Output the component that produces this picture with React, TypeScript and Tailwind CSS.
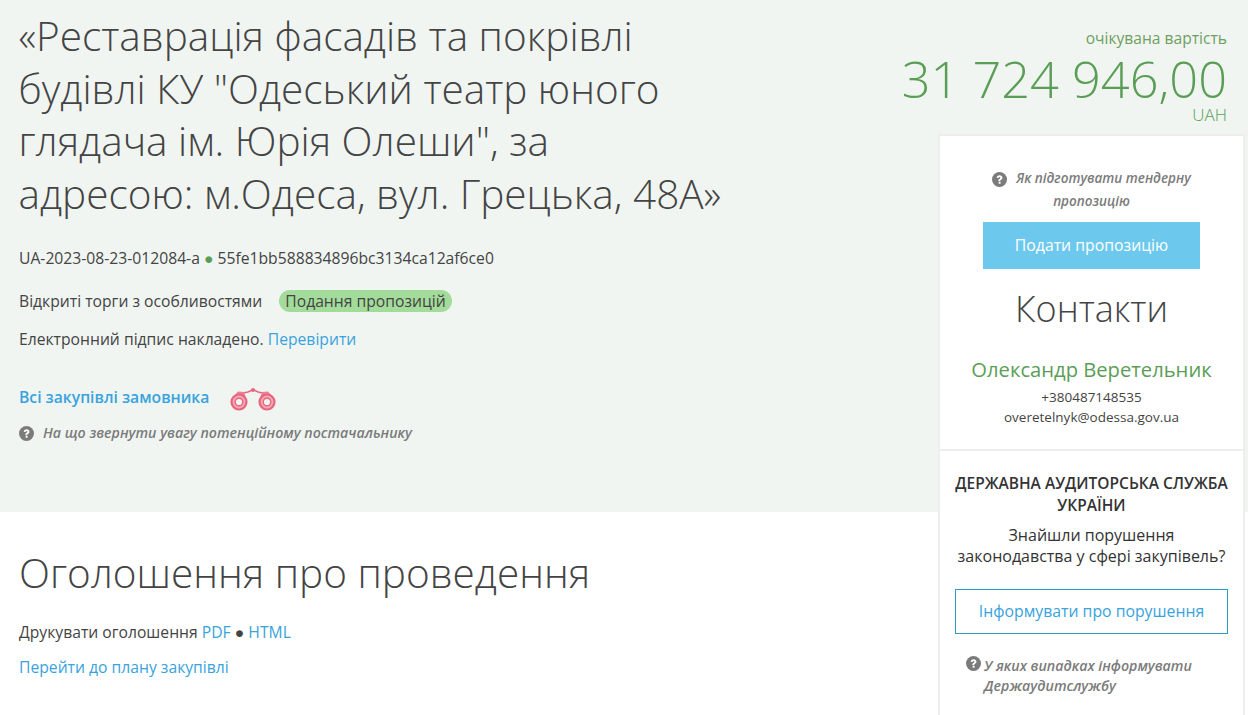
const font = { fontFamily: '"Open Sans", sans-serif' };

function Help({ className = "" }: { className?: string }) {
  return (
    <svg viewBox="0 0 24 24" className={"inline-block w-[15px] h-[15px] " + className}>
      <circle cx="12" cy="12" r="12" fill="#7b7b7b" />
      <path d="M7.500 9.300c.2-2.500 2-4.100 4.700-4.100 2.600 0 4.500 1.500 4.500 3.800 0 1.700-1 2.600-2.200 3.400-1 .6-1.300 1-1.300 1.900v.5h-3v-.8c0-1.500.6-2.300 1.700-3 .9-.6 1.500-1 1.500-1.700 0-.8-.6-1.300-1.300-1.300-.9 0-1.400.6-1.500 1.600z" fill="#ffffff" />
      <rect x="10.700" y="15.800" width="3" height="3" fill="#ffffff" />
    </svg>
  );
}

function Binoculars() {
  return (
    <svg viewBox="0 0 46 23" className="w-[46px] h-[23px]" fill="none">
      <path d="M13 5 L18 4 L23 1.500 L28 4 L33 5" stroke="#e8667d" strokeWidth="1.500" />
      <circle cx="23" cy="2" r="2" fill="#e8667d" />
      <path d="M2 10 L8 3.500 L14 4 L16 10 Z M44 10 L38 3.500 L32 4 L30 10 Z" fill="#ec7f92" />
      <circle cx="9" cy="14" r="7.500" stroke="#e8667d" strokeWidth="2.200" fill="#f3a9b7" />
      <circle cx="9" cy="14" r="3.800" stroke="#e8667d" strokeWidth="1.400" fill="#f0f5f2" />
      <circle cx="37" cy="14" r="7.500" stroke="#e8667d" strokeWidth="2.200" fill="#f3a9b7" />
      <circle cx="37" cy="14" r="3.800" stroke="#e8667d" strokeWidth="1.400" fill="#f0f5f2" />
    </svg>
  );
}

export default function App() {
  return (
    <div style={font} className="relative w-[1248px] h-[715px] overflow-hidden bg-white text-[#444] text-[15.7px]">
      <div className="absolute left-0 top-0 w-full h-[512px] bg-[#f0f5f2]" />
      <div className="relative flex">
        <main className="w-[900px] pl-[19px] shrink-0">
          <h1 className="pt-[10px] w-[705px] text-[40.500px] leading-[52.500px] font-light text-[#444] -ml-[0.500px]">
            «Реставрація фасадів та покрівлі будівлі КУ "Одеський театр юного глядача ім. Юрія Олеши", за адресою: м.Одеса, вул. Грецька, 48А»
          </h1>
          <p className="mt-[27px] leading-[22px]">
            UA-2023-08-23-012084-a <span className="text-[#5a9e56]">●</span> 55fe1bb588834896bc3134ca12af6ce0
          </p>
          <div className="mt-[21px] flex items-center leading-[22px]">
            <span>Відкриті торги з особливостями</span>
            <span className="ml-[17px] rounded-full bg-[#a3dc9a] px-[6px]">Подання пропозицій</span>
          </div>
          <p className="mt-[16px] leading-[22px]">
            Електронний підпис накладено. <a className="text-[#38a3dd]">Перевірити</a>
          </p>
          <div className="mt-[32px] flex items-center h-[32px]">
            <a className="font-semibold text-[#38a3dd]">Всі закупівлі замовника</a>
            <span className="ml-[21px] mt-[3px]"><Binoculars /></span>
          </div>
          <div className="mt-[9px] flex items-center gap-[9px] italic font-semibold text-[#7b7b7b] leading-[20px] text-[14.200px]">
            <Help />
            <span>На що звернути увагу потенційному постачальнику</span>
          </div>
          <h2 className="mt-[104px] text-[40.500px] leading-[52px] font-light">Оголошення про проведення</h2>
          <p className="mt-[22px] leading-[22px]">
            Друкувати оголошення <a className="text-[#38a3dd]">PDF</a> ● <a className="text-[#38a3dd]">HTML</a>
          </p>
          <p className="mt-[13px] leading-[22px]">
            <a className="text-[#38a3dd]">Перейти до плану закупівлі</a>
          </p>
        </main>
        <aside className="w-[348px] shrink-0">
          <div className="pr-[21px] pt-[27px] text-right text-[#5a9e56] -ml-[60px]">
            <div className="leading-[22px] text-[#6f9f5f] text-[15.600px]">очікувана вартість</div>
            <div className="text-[50.500px] leading-[60px] font-light whitespace-nowrap">31 724 946,00</div>
            <div className="text-[17px] leading-[17px] -mt-[3px] font-light">UAH</div>
          </div>
          <div className="ml-[38px] mt-[11px] mr-[3px] pb-[40px] border-2 border-[#eeeeee] bg-white text-center">
            <div className="h-[315px] px-[42px] pt-[31px] border-b-2 border-[#eeeeee]">
              <div className="italic font-semibold text-[#7b7b7b] leading-[23px] text-[13.500px]">
                <Help className="mr-[9px]" />
                Як підготувати тендерну пропозицію
              </div>
              <div className="mx-[1px] mt-[9px] h-[47px] bg-[#6dc8ee] text-white leading-[47px] text-[15.800px]">Подати пропозицію</div>
              <div className="mt-[15px] text-[36px] leading-[50px] font-light">Контакти</div>
              <div className="mt-[22px] -mx-[20px] text-[20.200px] leading-[26px] text-[#5a9e56]">Олександр Веретельник</div>
              <div className="mt-[5px] text-[13.500px] leading-[20px]">+380487148535</div>
              <div className="text-[13.500px] leading-[20px] -mx-[20px]">overetelnyk@odessa.gov.ua</div>
            </div>
            <div className="px-[15px] pt-[21px]">
              <div className="font-semibold leading-[22px] uppercase text-[#333] text-[15.500px] -mx-[5px]">Державна аудиторська служба України</div>
              <div className="mt-[9px] text-[16px] leading-[21px] text-[#333] -mx-[5px]">Знайшли порушення<br />законодавства у сфері закупівель?</div>
              <div className="mt-[22px] h-[45px] leading-[43px] border border-[#2f9cc4] text-[#38a3dd] text-[15.800px]">Інформувати про порушення</div>
              <div className="mt-[22px] pl-[29px] text-left italic font-semibold text-[#7b7b7b] leading-[20px] relative text-[14.200px]">
                <Help className="absolute left-[11px] top-0 w-[14px] h-[14px]" />
                У яких випадках інформувати Держаудитслужбу
              </div>
            </div>
          </div>
        </aside>
      </div>
    </div>
  );
}
